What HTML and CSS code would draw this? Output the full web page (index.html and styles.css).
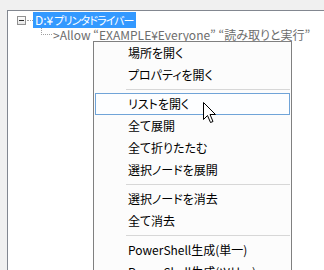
FILE: index.html
```html
<!DOCTYPE html>
<html lang="ja">
<head>
<meta charset="utf-8">
<link rel="stylesheet" href="styles.css">
</head>
<body>
<div class="panel">
  <div class="row root">
    <span class="expander"><span class="minus"></span></span>
    <span class="hline"></span>
    <span class="label selected">D:¥<span class="kana">プリンタドライバー</span></span>
  </div>
  <div class="row child">
    <span class="elbow"></span>
    <span class="label dim">&gt;Allow “EXAMPLE¥Everyone” “読み取りと実行”</span>
  </div>
</div>

<div class="menu">
  <div class="item">場所を開く</div>
  <div class="item">プロパティを開く</div>
  <div class="sep"></div>
  <div class="item hot">リストを開く</div>
  <div class="item">全て展開</div>
  <div class="item">全て折りたたむ</div>
  <div class="item">選択ノードを展開</div>
  <div class="sep"></div>
  <div class="item">選択ノードを消去</div>
  <div class="item">全て消去</div>
  <div class="sep"></div>
  <div class="item">PowerShell生成(単一)</div>
  <div class="item">PowerShell生成(ツリー)</div>
</div>

<svg class="cursor" width="13" height="22" viewBox="0 0 13 22">
  <path d="M0.5 0.5 L0.5 17.5 L4.5 13.5 L7.5 20.5 L10 19.5 L7 12.5 L12.5 12.5 Z" fill="#fff" stroke="#000" stroke-width="1" stroke-linejoin="miter"/>
</svg>
</body>
</html>
```

FILE: styles.css
```css
html, body {
  margin: 0;
  padding: 0;
  background: #f0f0f0;
  width: 324px;
  height: 270px;
  overflow: hidden;
  font-family: "Noto Sans CJK JP", "Noto Sans", sans-serif;
  font-size: 12px;
  font-feature-settings: "palt";
}

.panel {
  margin: 10px 0 0 7px;
  height: 260px;
  background: #fff;
  border-top: 1px solid #828790;
  border-left: 1px solid #828790;
  padding-top: 1px;
}

.row {
  display: flex;
  align-items: center;
  height: 16px;
  white-space: nowrap;
}

.root {
  padding-left: 9px;
}

.expander {
  box-sizing: border-box;
  width: 9px;
  height: 9px;
  border: 1px solid #919191;
  background: linear-gradient(#fdfdfd, #e6e6e6);
  display: flex;
  align-items: center;
  justify-content: center;
}

.minus {
  width: 5px;
  height: 1px;
  background: #2a2a2a;
}

.hline {
  width: 6px;
  margin-left: 1px;
  border-top: 1px dotted #a0a0a0;
}

.label {
  line-height: 15px;
  padding: 0 2px;
}

.selected {
  background: #3399ff;
  color: #fff;
}

.kana {
  font-size: 11px;
  letter-spacing: -0.9px;
  margin-left: 1px;
}

.child {
  padding-left: 33px;
  align-items: flex-start;
}

.elbow {
  width: 10px;
  height: 6px;
  border-left: 1px dotted #a0a0a0;
  border-bottom: 1px dotted #a0a0a0;
}

.dim {
  color: #6d6d6d;
  padding-left: 1px;
  line-height: 13px;
}

.menu {
  position: absolute;
  left: 93px;
  top: 41px;
  width: 199px;
  height: 240px;
  box-sizing: border-box;
  background: #fcfcfc;
  border: 1px solid #808080;
  color: #000;
}

.item {
  box-sizing: border-box;
  height: 22px;
  line-height: 20px;
  margin: 0 1px;
  padding-left: 32px;
  border: 1px solid transparent;
  white-space: nowrap;
}

.item.hot {
  border-color: #70a4d8;
  background: #fdfeff;
}

.sep {
  height: 7px;
  box-sizing: border-box;
  margin: 0 1px 0 32px;
  padding-top: 3px;
}

.sep::before {
  content: "";
  display: block;
  border-top: 1px solid #d7d7d7;
}

.cursor {
  position: absolute;
  left: 203px;
  top: 102px;
}
```
